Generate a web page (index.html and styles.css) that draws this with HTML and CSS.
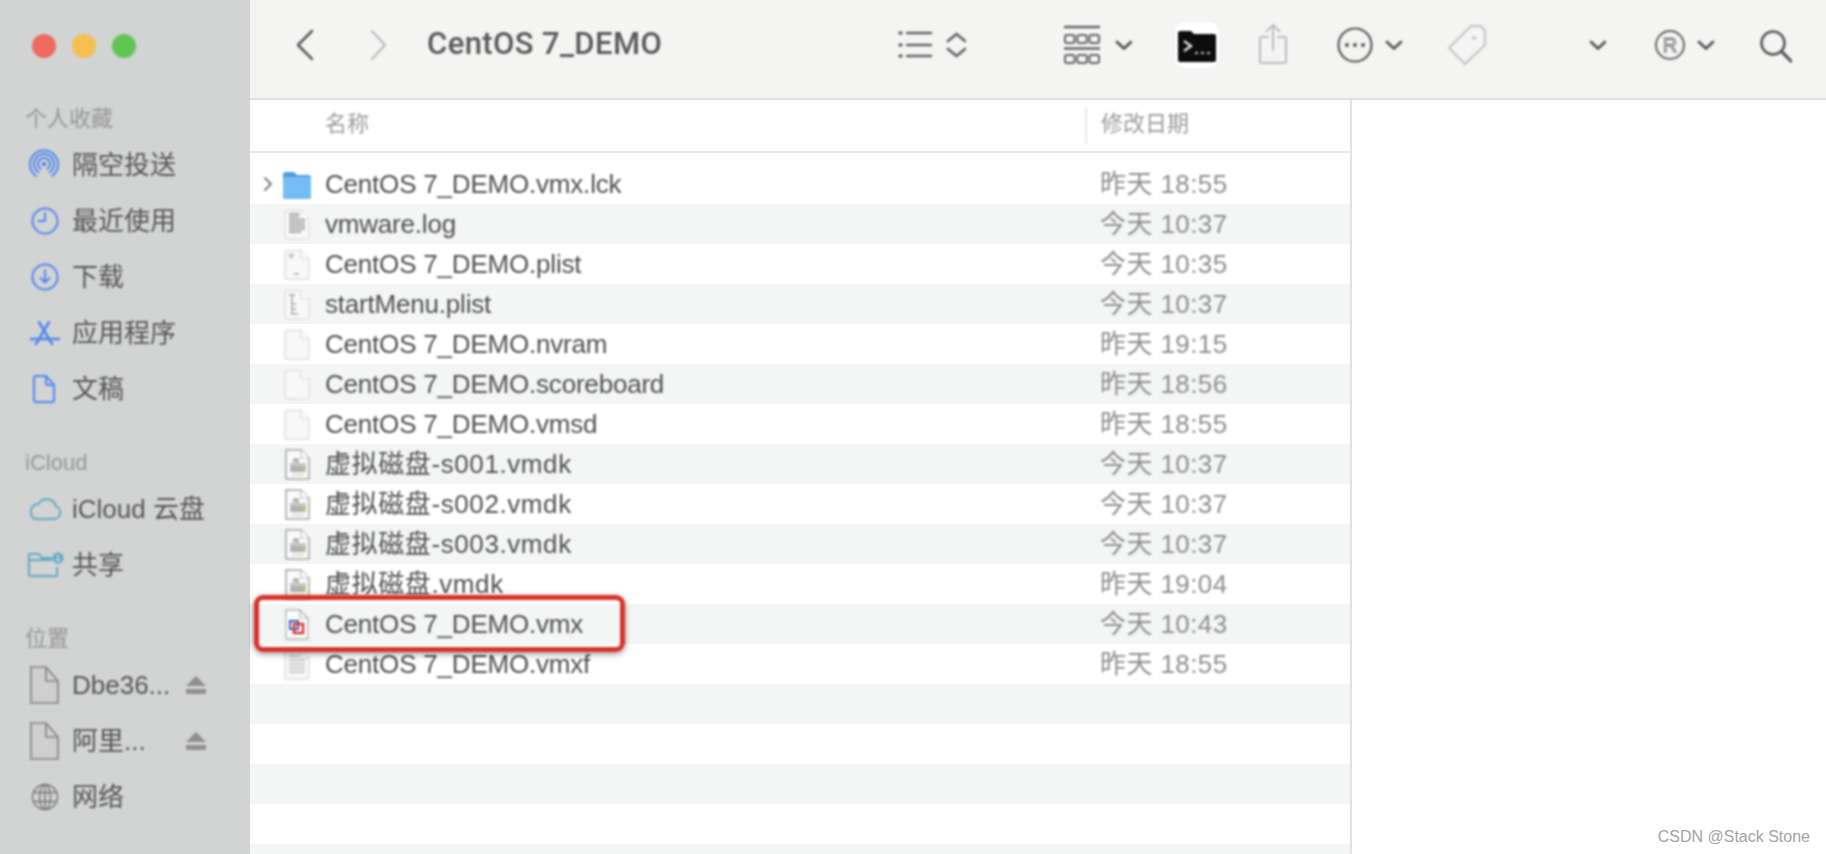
FILE: index.html
```html
<!DOCTYPE html>
<html lang="zh-CN">
<head>
    <meta charset="UTF-8">
    <title>CentOS 7_DEMO</title>
    <link rel="stylesheet" href="styles.css">
</head>
<body>
    <svg class="sprites" width="0" height="0">
        <symbol id="doc-blank" viewBox="0 0 32 40">
            <path d="M6 6.5h14l8 8V33a2 2 0 0 1-2 2H6a2 2 0 0 1-2-2V8.500a2 2 0 0 1 2-2z" fill="#f8f8f8" stroke="#e0e0e0" stroke-width="1.500"/>
            <path d="M20 6.500v6a2 2 0 0 0 2 2h6" fill="#fff" stroke="#e0e0e0" stroke-width="1.500"/>
        </symbol>
        <symbol id="doc-vmdk" viewBox="0 0 32 40">
            <path d="M5 6h15l8 8v21H5z" fill="#fafafa" stroke="#a5a5a5" stroke-width="1.500"/>
            <path d="M20 6v8h8" fill="#fff" stroke="#bbb" stroke-width="1.200"/>
            <path d="M12 14h6v5h7v9H9v-9h3z" fill="#c4c4c4"/>
            <path d="M10 24h14M10 27h14M13 16h4" stroke="#8e8e8e" stroke-width="1.200"/>
            <circle cx="23" cy="26" r="1.500" fill="#e6c640"/>
            <path d="M11 31h12" stroke="#bdbdbd" stroke-width="1"/>
        </symbol>
    </svg>

    <div class="window">
        <aside class="sidebar">
            <div class="lights">
                <span class="light red"></span>
                <span class="light yellow"></span>
                <span class="light green"></span>
            </div>

            <div class="side-group">
                <div class="side-title">个人收藏</div>
                <div class="side-item">
                    <svg class="side-icon" viewBox="0 0 40 40" fill="none" stroke="#5187ee" stroke-width="2" stroke-linecap="round"><path d="M11 31a14 14 0 1 1 16 0"/><path d="M13.300 27.200a10 10 0 1 1 11.400 0"/><path d="M15.600 23.900a6 6 0 1 1 6.800 0"/><circle cx="19" cy="19" r="2.300" fill="#5187ee" stroke="none"/></svg>
                    <span>隔空投送</span>
                </div>
                <div class="side-item">
                    <svg class="side-icon" viewBox="0 0 40 40" fill="none" stroke="#5187ee" stroke-width="2" stroke-linecap="round" stroke-linejoin="round"><circle cx="20" cy="20" r="12.500"/><path d="M20 12v8h-6.500"/></svg>
                    <span>最近使用</span>
                </div>
                <div class="side-item">
                    <svg class="side-icon" viewBox="0 0 40 40" fill="none" stroke="#5187ee" stroke-width="2" stroke-linecap="round" stroke-linejoin="round"><circle cx="20" cy="20" r="12.500"/><path d="M20 13.500v12M15.500 21l4.500 4.500 4.500-4.500"/></svg>
                    <span>下载</span>
                </div>
                <div class="side-item">
                    <svg class="side-icon" viewBox="0 0 40 40" fill="none" stroke="#5187ee" stroke-width="2.600" stroke-linecap="round"><path d="M14 9l13 22M24 9L11 31M6 26h28"/></svg>
                    <span>应用程序</span>
                </div>
                <div class="side-item">
                    <svg class="side-icon" viewBox="0 0 40 40" fill="none" stroke="#5187ee" stroke-width="2" stroke-linejoin="round"><path d="M11 7h10l8 9v15a2 2 0 0 1-2 2H11a2 2 0 0 1-2-2V9a2 2 0 0 1 2-2z"/><path d="M21 7v7a2 2 0 0 0 2 2h6"/></svg>
                    <span>文稿</span>
                </div>
            </div>

            <div class="side-group">
                <div class="side-title">iCloud</div>
                <div class="side-item">
                    <svg class="side-icon" viewBox="0 0 40 40" fill="none" stroke="#62a9c6" stroke-width="2" stroke-linejoin="round"><path d="M10 30h19a6.500 6.500 0 0 0 2-12.600A9.500 9.500 0 0 0 13.500 15 8 8 0 0 0 10 30z"/></svg>
                    <span>iCloud 云盘</span>
                </div>
                <div class="side-item">
                    <svg class="side-icon" viewBox="0 0 40 40" fill="none" stroke="#62a9c6" stroke-width="2" stroke-linejoin="round"><path d="M4 31V9h10l3 4h10M4 15h23M4 31h28v-9"/><circle cx="33" cy="13" r="5.500" fill="#62a9c6" stroke="none"/><circle cx="33" cy="11" r="1.500" fill="#d2d3d3" stroke="none"/><path d="M30.500 16a2.500 2.500 0 0 1 5 0z" fill="#d2d3d3" stroke="none"/></svg>
                    <span>共享</span>
                </div>
            </div>

            <div class="side-group">
                <div class="side-title">位置</div>
                <div class="side-item">
                    <svg class="side-icon" viewBox="0 0 40 40" fill="#cfcfcf" stroke="#858585" stroke-width="1.700"><path d="M6 2h15l12 14v22H6z"/><path d="M21 2v14h12" fill="none"/></svg>
                    <span>Dbe36...</span>
                    <svg class="eject" viewBox="0 0 22 20" fill="#8f8f8f"><path d="M11 1l10 10H1z"/><rect x="1" y="14" width="20" height="5" rx="1"/></svg>
                </div>
                <div class="side-item">
                    <svg class="side-icon" viewBox="0 0 40 40" fill="#cfcfcf" stroke="#858585" stroke-width="1.700"><path d="M6 2h15l12 14v22H6z"/><path d="M21 2v14h12" fill="none"/></svg>
                    <span>阿里...</span>
                    <svg class="eject" viewBox="0 0 22 20" fill="#8f8f8f"><path d="M11 1l10 10H1z"/><rect x="1" y="14" width="20" height="5" rx="1"/></svg>
                </div>
                <div class="side-item">
                    <svg class="side-icon" viewBox="0 0 40 40" fill="none" stroke="#777" stroke-width="1.400"><circle cx="20" cy="20" r="12.500"/><ellipse cx="20" cy="20" rx="5.500" ry="12.500"/><path d="M8 15.500h24M8 24.500h24M20 7.500v25"/></svg>
                    <span>网络</span>
                </div>
            </div>
        </aside>

        <main class="main">
            <header class="toolbar">
                <svg class="tb tb-back" viewBox="0 0 18 44" fill="none" stroke="#5a5a5a" stroke-width="2.500" stroke-linecap="round" stroke-linejoin="round"><path d="M16 8L2 22l14 14"/></svg>
                <svg class="tb tb-forward" viewBox="0 0 16 44" fill="none" stroke="#bdbdbd" stroke-width="2.300" stroke-linecap="round" stroke-linejoin="round"><path d="M2 8l13 14L2 36"/></svg>
                <div class="title">CentOS 7_DEMO</div>
                <svg class="tb tb-list" viewBox="0 0 68 44" fill="none" stroke="#666" stroke-width="2.500" stroke-linecap="round" stroke-linejoin="round"><path d="M9 10h24M9 22h24M9 33h24"/><path d="M2 10h1M2 22h1M2 33h1" stroke-width="3.500"/><path d="M50 18l8.500-7 8.500 7M50 26l8.500 7 8.500-7" stroke-width="2.800"/></svg>
                <svg class="tb tb-grid" viewBox="0 0 68 44" fill="none" stroke="#666" stroke-width="2"><path d="M0 4h36M0 25.500h36" stroke-width="2.400"/><rect x="1" y="12" width="9.500" height="8" rx="2"/><rect x="13.300" y="12" width="9.500" height="8" rx="2"/><rect x="25.500" y="12" width="9.500" height="8" rx="2"/><rect x="1" y="32" width="9.500" height="8" rx="2"/><rect x="13.300" y="32" width="9.500" height="8" rx="2"/><rect x="25.500" y="32" width="9.500" height="8" rx="2"/><path d="M53 19l7 6.500 7-6.500" stroke="#555" stroke-width="2.800" stroke-linecap="round" stroke-linejoin="round"/></svg>
                <svg class="tb tb-term" viewBox="0 0 44 46"><rect width="44" height="46" rx="10" fill="#fff"/><path d="M3 11a2 2 0 0 1 2-2h11l3 3h20a2 2 0 0 1 2 2v24a2 2 0 0 1-2 2H5a2 2 0 0 1-2-2z" fill="#0d0d0d"/><path d="M9 19l7 5-7 5" fill="none" stroke="#ddd" stroke-width="2.400"/><path d="M20 31h3M26 31h3M32 31h3" stroke="#bbb" stroke-width="2"/></svg>
                <svg class="tb tb-share" viewBox="0 0 30 44" fill="none" stroke="#bcbcbc" stroke-width="2" stroke-linecap="round" stroke-linejoin="round"><path d="M15 2v25M8.500 8.500L15 2l6.500 6.500"/><path d="M10 14H4a2 2 0 0 0-2 2v22a2 2 0 0 0 2 2h22a2 2 0 0 0 2-2V16a2 2 0 0 0-2-2h-6"/></svg>
                <svg class="tb tb-more" viewBox="0 0 65 44" fill="none" stroke="#5a5a5a" stroke-width="2.200"><circle cx="18" cy="22" r="16.500"/><circle cx="10" cy="22" r="2" fill="#5a5a5a" stroke="none"/><circle cx="18" cy="22" r="2" fill="#5a5a5a" stroke="none"/><circle cx="26" cy="22" r="2" fill="#5a5a5a" stroke="none"/><path d="M50 19l7 6.500 7-6.500" stroke-width="2.800" stroke-linecap="round" stroke-linejoin="round"/></svg>
                <svg class="tb tb-tag" viewBox="0 0 38 44" fill="none" stroke="#c6c6c6" stroke-width="2.200" stroke-linejoin="round"><path d="M23 3h10l4 5v14L17 41 1 25z"/><circle cx="26" cy="15" r="2" fill="#c6c6c6" stroke="none"/></svg>
                <svg class="tb tb-chev" viewBox="0 0 16 44" fill="none" stroke="#555" stroke-width="2.800" stroke-linecap="round" stroke-linejoin="round"><path d="M1 19l7 6.500 7-6.500"/></svg>
                <svg class="tb tb-reg" viewBox="0 0 59 44" fill="none" stroke="#666" stroke-width="2"><circle cx="15" cy="22" r="14"/><text class="reg-letter" x="15" y="29" text-anchor="middle">R</text><path d="M44 19l7 6.500 7-6.500" stroke="#555" stroke-width="2.800" stroke-linecap="round" stroke-linejoin="round"/></svg>
                <svg class="tb tb-search" viewBox="0 0 32 44" fill="none" stroke="#5a5a5a" stroke-width="2.600" stroke-linecap="round"><circle cx="13" cy="20" r="11.500"/><path d="M21.500 28.500L31 38" stroke-width="3.200"/></svg>
            </header>

            <div class="content">
                <section class="list">
                    <div class="list-head">
                        <div class="head-name">名称</div>
                        <div class="head-date">修改日期</div>
                    </div>
                    <div class="rows">
                        <div class="row">
                            <svg class="arrow" viewBox="0 0 10 16" fill="none" stroke="#777" stroke-width="1.800" stroke-linecap="round" stroke-linejoin="round"><path d="M2 2l6 6-6 6"/></svg>
                            <svg class="file-icon" viewBox="0 0 32 40"><path d="M2 11a3 3 0 0 1 3-3h8l3 3h11a3 3 0 0 1 3 3v19a2 2 0 0 1-2 2H4a2 2 0 0 1-2-2z" fill="#4f9de0"/><path d="M2 15a2 2 0 0 1 2-2h24a2 2 0 0 1 2 2v18a2 2 0 0 1-2 2H4a2 2 0 0 1-2-2z" fill="#74bcf2"/></svg>
                            <span class="name">CentOS 7_DEMO.vmx.lck</span><span class="date">昨天 18:55</span>
                        </div>
                        <div class="row">
                            <span class="arrow"></span>
                            <svg class="file-icon" viewBox="0 0 32 40"><use href="#doc-blank"/><path d="M8 10h10M8 13h10M8 16h16M8 19h16M8 22h16M8 25h16M8 28h12" stroke="#a9a9a9" stroke-width="2"/></svg>
                            <span class="name">vmware.log</span><span class="date">今天 10:37</span>
                        </div>
                        <div class="row">
                            <span class="arrow"></span>
                            <svg class="file-icon" viewBox="0 0 32 40"><use href="#doc-blank"/><path d="M8 11h5M10 11v4M13 30h5" stroke="#a8a8a8" stroke-width="1.400"/></svg>
                            <span class="name">CentOS 7_DEMO.plist</span><span class="date">今天 10:35</span>
                        </div>
                        <div class="row">
                            <span class="arrow"></span>
                            <svg class="file-icon" viewBox="0 0 32 40"><use href="#doc-blank"/><path d="M8 11h6M11 11v19h6M11 20h4M11 25h4" fill="none" stroke="#a8a8a8" stroke-width="1.400"/></svg>
                            <span class="name">startMenu.plist</span><span class="date">今天 10:37</span>
                        </div>
                        <div class="row">
                            <span class="arrow"></span>
                            <svg class="file-icon" viewBox="0 0 32 40"><use href="#doc-blank"/></svg>
                            <span class="name">CentOS 7_DEMO.nvram</span><span class="date">昨天 19:15</span>
                        </div>
                        <div class="row">
                            <span class="arrow"></span>
                            <svg class="file-icon" viewBox="0 0 32 40"><use href="#doc-blank"/></svg>
                            <span class="name">CentOS 7_DEMO.scoreboard</span><span class="date">昨天 18:56</span>
                        </div>
                        <div class="row">
                            <span class="arrow"></span>
                            <svg class="file-icon" viewBox="0 0 32 40"><use href="#doc-blank"/></svg>
                            <span class="name">CentOS 7_DEMO.vmsd</span><span class="date">昨天 18:55</span>
                        </div>
                        <div class="row">
                            <span class="arrow"></span>
                            <svg class="file-icon" viewBox="0 0 32 40"><use href="#doc-vmdk"/></svg>
                            <span class="name name-disk">虚拟磁盘-s001.vmdk</span><span class="date">今天 10:37</span>
                        </div>
                        <div class="row">
                            <span class="arrow"></span>
                            <svg class="file-icon" viewBox="0 0 32 40"><use href="#doc-vmdk"/></svg>
                            <span class="name name-disk">虚拟磁盘-s002.vmdk</span><span class="date">今天 10:37</span>
                        </div>
                        <div class="row">
                            <span class="arrow"></span>
                            <svg class="file-icon" viewBox="0 0 32 40"><use href="#doc-vmdk"/></svg>
                            <span class="name name-disk">虚拟磁盘-s003.vmdk</span><span class="date">今天 10:37</span>
                        </div>
                        <div class="row">
                            <span class="arrow"></span>
                            <svg class="file-icon" viewBox="0 0 32 40"><use href="#doc-vmdk"/></svg>
                            <span class="name name-disk">虚拟磁盘.vmdk</span><span class="date">昨天 19:04</span>
                        </div>
                        <div class="row">
                            <span class="arrow"></span>
                            <svg class="file-icon" viewBox="0 0 32 40"><path d="M5 6h14l8 8v21H5z" fill="#fbfbfb" stroke="#b5b5b5" stroke-width="1.300"/><path d="M19 6v8h8" fill="none" stroke="#b5b5b5" stroke-width="1.200"/><rect x="9" y="17" width="8" height="8" fill="none" stroke="#3b62c4" stroke-width="2"/><rect x="13" y="20" width="9" height="9" fill="none" stroke="#e0312b" stroke-width="2.400"/></svg>
                            <span class="name">CentOS 7_DEMO.vmx</span><span class="date">今天 10:43</span>
                            <div class="highlight"></div>
                        </div>
                        <div class="row">
                            <span class="arrow"></span>
                            <svg class="file-icon" viewBox="0 0 32 40"><use href="#doc-blank"/><path d="M8 12h10M8 16h16M8 20h16M8 24h16M8 28h16" stroke="#cfcfcf" stroke-width="2.400"/></svg>
                            <span class="name">CentOS 7_DEMO.vmxf</span><span class="date">昨天 18:55</span>
                        </div>
                        <div class="row"></div>
                        <div class="row"></div>
                        <div class="row"></div>
                        <div class="row"></div>
                        <div class="row"></div>
                    </div>
                </section>
                <section class="preview"></section>
            </div>
        </main>
    </div>

    <div class="watermark">CSDN @Stack Stone</div>
</body>
</html>
```

FILE: styles.css
```css
html, body {
    margin: 0;
    height: 100%;
    overflow: hidden;
    background-color: white;
}
body {
    font-family: "Liberation Sans", "Noto Sans CJK SC", sans-serif;
}
.sprites {
    position: absolute;
}
.window {
    display: flex;
    height: 854px;
    overflow: hidden;
}
/* the reference is a soft upscaled photo, so text and icons get a slight blur */
.lights,
.side-group,
.toolbar > *,
.list-head > *,
.row > * {
    filter: blur(0.8px);
}

/* sidebar */
.sidebar {
    flex: none;
    width: 250px;
    box-sizing: border-box;
    padding-top: 34px;
    background-color: #d2d3d3;
    color: #565656;
}
.lights {
    display: flex;
    gap: 16px;
    padding-left: 32px;
    margin-bottom: 46px;
}
.light {
    width: 24px;
    height: 24px;
    border-radius: 50%;
}
.red {
    background-color: #ec6a5e;
}
.yellow {
    background-color: #f4bf4f;
}
.green {
    background-color: #61c554;
}
.side-group {
    margin-bottom: 31px;
}
.side-title {
    height: 30px;
    line-height: 30px;
    padding-left: 25px;
    margin-bottom: 3px;
    font-size: 22px;
    color: #969797;
}
.side-item {
    display: flex;
    align-items: center;
    height: 56px;
    line-height: 56px;
    padding-left: 25px;
    font-size: 26px;
}
.side-icon {
    flex: none;
    width: 40px;
    height: 40px;
    margin-right: 7px;
}
.eject {
    flex: none;
    width: 22px;
    height: 20px;
    margin-left: auto;
    margin-right: 43px;
}

/* toolbar */
.main {
    flex: 1;
    display: flex;
    flex-direction: column;
    min-width: 0;
}
.toolbar {
    flex: none;
    display: flex;
    align-items: center;
    height: 100px;
    box-sizing: border-box;
    padding-left: 46px;
    padding-bottom: 8px;
    background-color: #f4f4f3;
    border-bottom: 2px solid #e0e0e0;
}
.tb {
    flex: none;
    height: 44px;
}
.tb-back {
    width: 18px;
}
.tb-forward {
    width: 16px;
    margin-left: 56px;
}
.title {
    flex: none;
    width: 235px;
    margin-left: 41px;
    font-family: Roboto, "Liberation Sans", sans-serif;
    font-size: 31px;
    line-height: 40px;
    padding-bottom: 2px;
    font-weight: 500;
    letter-spacing: 0.4px;
    color: #5a5a5a;
    white-space: nowrap;
}
.tb-list {
    width: 68px;
    margin-left: 236px;
}
.tb-grid {
    width: 68px;
    margin-left: 98px;
}
.tb-term {
    width: 44px;
    height: 46px;
    margin-left: 43px;
}
.tb-share {
    width: 30px;
    margin-left: 39px;
}
.tb-more {
    width: 65px;
    margin-left: 49px;
}
.tb-tag {
    width: 38px;
    margin-left: 46px;
}
.tb-chev {
    width: 16px;
    margin-left: 104px;
}
.tb-reg {
    width: 59px;
    margin-left: 49px;
}
.reg-letter {
    font-family: "Liberation Sans", sans-serif;
    font-size: 20px;
    stroke-width: 0.9;
}
.tb-search {
    width: 32px;
    margin-left: 46px;
}

/* file list */
.content {
    flex: 1;
    display: flex;
    min-height: 0;
}
.list {
    flex: none;
    width: 1102px;
    box-sizing: border-box;
    border-right: 2px solid #e2e2e2;
}
.list-head {
    display: flex;
    align-items: center;
    height: 53px;
    box-sizing: border-box;
    border-bottom: 2px solid #e8e8e8;
    font-size: 22px;
    line-height: 33px;
    color: #9b9b9b;
}
.head-name {
    width: 760px;
    height: 37px;
    padding-left: 75px;
}
.head-date {
    height: 37px;
    padding-left: 14px;
    border-left: 2px solid #e8e8e8;
}
.rows {
    padding-top: 11px;
}
.row {
    position: relative;
    display: flex;
    align-items: center;
    height: 40px;
    line-height: 40px;
    padding-left: 13px;
    font-size: 26px;
}
.row:nth-child(even) {
    background-color: #f4f5f5;
}
.arrow {
    flex: none;
    width: 10px;
    height: 16px;
    margin-right: 8px;
}
.file-icon {
    flex: none;
    width: 32px;
    height: 40px;
}
.name {
    flex: none;
    width: 775px;
    margin-left: 12px;
    letter-spacing: -0.2px;
    color: #505050;
    white-space: nowrap;
}
.name-disk {
    letter-spacing: 0.6px;
}
.date {
    letter-spacing: 0.4px;
    color: #8e8e8e;
    white-space: nowrap;
}
.highlight {
    position: absolute;
    left: 4px;
    top: -9px;
    width: 371px;
    height: 57px;
    box-sizing: border-box;
    border: 5px solid #d9322b;
    border-radius: 9px;
    box-shadow: 0 2px 6px rgba(0, 0, 0, 0.4);
    z-index: 2;
}
.preview {
    flex: 1;
    background-color: white;
}
.watermark {
    position: absolute;
    right: 16px;
    bottom: 8px;
    font-size: 16px;
    color: #a3a3a3;
}
```
